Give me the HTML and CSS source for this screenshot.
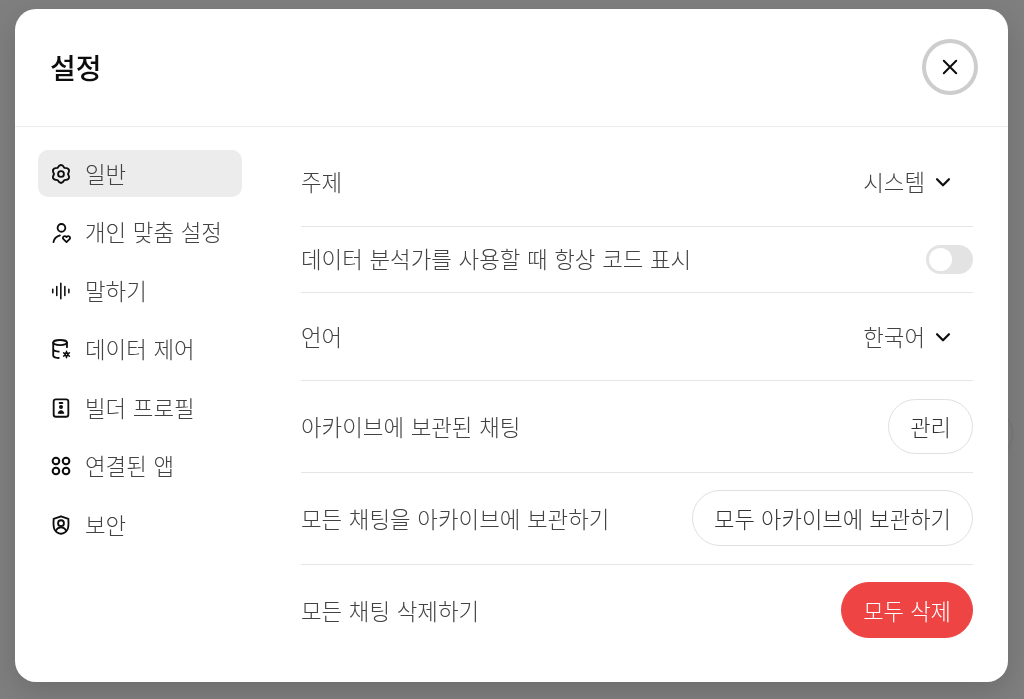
FILE: index.html
```html
<!DOCTYPE html>
<html lang="ko">
  <head>
    <meta charset="UTF-8" />
    <meta name="viewport" content="width=device-width, initial-scale=1.0" />
    <title>설정</title>
    <link rel="stylesheet" href="styles.css">
  </head>
  <body>
    <div class="behindBtn"></div>
    <div class="modal">
      <div class="modalHeader">
        <h1>설정</h1>
        <button class="closeBtn" aria-label="닫기">
          <svg width="24" height="24" viewBox="0 0 24 24" fill="none" stroke="#0d0d0d" stroke-width="2" stroke-linecap="round">
            <path d="M5.800 5.800 18.200 18.200M18.200 5.800 5.800 18.200" />
          </svg>
        </button>
      </div>
      <div class="modalBody">
        <nav class="sideNav">
          <a class="navItem active">
            <svg class="navIcon" viewBox="0 0 24 24" fill="none" stroke="#0d0d0d" stroke-width="2" stroke-linejoin="round">
              <path d="M8.200 5.400Q12-1 15.800 5.400Q23.260 5.500 19.600 12Q23.260 18.500 15.800 18.600Q12 25 8.200 18.600Q.74 18.500 4.400 12Q.74 5.500 8.200 5.400z" />
              <circle cx="12" cy="12" r="3.200" />
            </svg>
            <span>일반</span>
          </a>
          <a class="navItem">
            <svg class="navIcon" viewBox="0 0 24 24" fill="none" stroke="#0d0d0d" stroke-width="2" stroke-linecap="round" stroke-linejoin="round">
              <circle cx="12.500" cy="7.500" r="4.200" />
              <path d="M3.800 23c.5-3 2.500-5.800 7-7.200" />
              <path d="M18 23l-3.300-3.200c-1.800-2 .9-4.600 3.300-2.400 2.400-2.200 5.100.4 3.300 2.400z" />
            </svg>
            <span>개인 맞춤 설정</span>
          </a>
          <a class="navItem">
            <svg class="navIcon" viewBox="0 0 24 24" fill="none" stroke="#0d0d0d" stroke-width="1.700" stroke-linecap="round">
              <path d="M3 10v4M7.400 7v10M11.800 3.500v17M16.200 7v10M20.600 10v4" />
            </svg>
            <span>말하기</span>
          </a>
          <a class="navItem">
            <svg class="navIcon" viewBox="0 0 24 24" fill="none" stroke="#0d0d0d" stroke-width="2" stroke-linecap="round" stroke-linejoin="round">
              <ellipse cx="11" cy="5" rx="7.500" ry="2.800" />
              <path d="M3.500 5v14c0 1.500 3 2.600 6 2.800M18.500 5v5M3.500 12c0 1.500 3 2.600 6 2.800" />
              <circle cx="18" cy="18" r="1.600" stroke-width="2" />
              <path d="M18 14.500v1M18 20.500v1M14.800 16.200l.9.500M20.300 19.300l.9.500M14.800 19.800l.9-.5M20.300 16.700l.9-.5" stroke-width="1.600" />
            </svg>
            <span>데이터 제어</span>
          </a>
          <a class="navItem">
            <svg class="navIcon" viewBox="0 0 24 24" fill="none" stroke="#0d0d0d" stroke-width="2" stroke-linecap="round" stroke-linejoin="round">
              <rect x="4" y="2.500" width="16" height="19" rx="2.500" />
              <path d="M10.500 6.500h3" />
              <circle cx="12" cy="11" r="1.200" />
              <path d="M9 17.500c0-3.500 6-3.500 6 0z" fill="#0d0d0d" stroke-width="1" />
            </svg>
            <span>빌더 프로필</span>
          </a>
          <a class="navItem">
            <svg class="navIcon" viewBox="0 0 24 24" fill="none" stroke="#0d0d0d" stroke-width="2.200">
              <circle cx="6.500" cy="6.500" r="3.600" />
              <circle cx="17.500" cy="6.500" r="3.600" />
              <circle cx="6.500" cy="17.500" r="3.600" />
              <circle cx="17.500" cy="17.500" r="3.600" />
            </svg>
            <span>연결된 앱</span>
          </a>
          <a class="navItem">
            <svg class="navIcon" viewBox="0 0 24 24" fill="none" stroke="#0d0d0d" stroke-width="2" stroke-linecap="round" stroke-linejoin="round">
              <path d="M12 2.500l8 2.800c.4 6 .4 9-.9 11.500-1.400 2.700-4 4.700-7.100 4.700s-5.700-2-7.100-4.700C3.600 14.300 3.600 11.300 4 5.300z" />
              <circle cx="12" cy="10" r="3.200" />
              <path d="M6.500 18c1-2.500 3-3.500 5.500-3.500s4.500 1 5.500 3.500" />
            </svg>
            <span>보안</span>
          </a>
        </nav>
        <div class="settings">
          <div class="row rowFirst">
            <span>주제</span>
            <div class="selectBox">
              <span>시스템</span>
              <svg class="chevron" viewBox="0 0 24 24" fill="none" stroke="#0d0d0d" stroke-width="2.400" stroke-linecap="round" stroke-linejoin="round">
                <path d="M5.500 9l6.500 6.500L18.500 9" />
              </svg>
            </div>
          </div>
          <div class="row rowToggle">
            <span>데이터 분석가를 사용할 때 항상 코드 표시</span>
            <div class="toggle"><div class="knob"></div></div>
          </div>
          <div class="row rowLang">
            <span>언어</span>
            <div class="selectBox">
              <span>한국어</span>
              <svg class="chevron" viewBox="0 0 24 24" fill="none" stroke="#0d0d0d" stroke-width="2.400" stroke-linecap="round" stroke-linejoin="round">
                <path d="M5.500 9l6.500 6.500L18.500 9" />
              </svg>
            </div>
          </div>
          <div class="row">
            <span>아카이브에 보관된 채팅</span>
            <button class="pillBtn">관리</button>
          </div>
          <div class="row">
            <span>모든 채팅을 아카이브에 보관하기</span>
            <button class="pillBtn">모두 아카이브에 보관하기</button>
          </div>
          <div class="row">
            <span>모든 채팅 삭제하기</span>
            <button class="pillBtn danger">모두 삭제</button>
          </div>
        </div>
      </div>
    </div>
  </body>
</html>
```

FILE: styles.css
```css
html,
body {
  height: 100%;
}

body {
  margin: 0;
  padding: 9px 16px 17px 15px;
  box-sizing: border-box;
  background-color: #7f7f7f;
  font-family: "Noto Sans CJK KR", "Noto Sans", sans-serif;
  word-spacing: 0.4px;
  overflow: hidden;
}

/* edge of a page button that shows next to the modal */
.behindBtn {
  position: absolute;
  top: 406px;
  left: 957px;
  width: 56px;
  height: 56px;
  border: 1px solid #777;
  border-radius: 50%;
  box-sizing: border-box;
}

.modal {
  position: relative;
  background-color: #fff;
  border-radius: 21px;
  height: 673px;
  box-shadow: 0 10px 30px rgba(0, 0, 0, 0.15);
  will-change: transform;
}

.modalHeader {
  display: flex;
  justify-content: space-between;
  align-items: center;
  height: 118px;
  padding: 0 30px 0 35px;
  border-bottom: 1px solid #ececec;
  box-sizing: border-box;
}

h1 {
  margin: 0;
  padding-bottom: 2px;
  font-size: 28px;
  font-weight: 500;
  color: #0d0d0d;
}

.closeBtn {
  display: flex;
  align-items: center;
  justify-content: center;
  width: 56px;
  height: 55.6px;
  padding: 0;
  margin-bottom: 1px;
  background-color: #fff;
  border: 4px solid #cdcdcd;
  border-radius: 50%;
}

.modalBody {
  display: flex;
}

.sideNav {
  display: flex;
  flex-direction: column;
  gap: 11.6px;
  width: 204px;
  margin: 23px 0 0 23px;
}

.navItem {
  display: flex;
  align-items: center;
  gap: 13px;
  height: 47px;
  padding: 0 12px;
  border-radius: 10px;
  color: #424242;
  font-size: 22.4px;
  font-weight: 300;
  white-space: nowrap;
}

.navItem span {
  padding-bottom: 2px;
}

.navItem.active {
  background-color: #ececec;
}

.navIcon {
  width: 22px;
  height: 22px;
  flex-shrink: 0;
}

.settings {
  width: 672px;
  margin-left: 59px;
  padding-top: 10px;
}

.row {
  display: flex;
  justify-content: space-between;
  align-items: center;
  height: 91.8px;
  border-bottom: 1px solid #e5e5e5;
  box-sizing: border-box;
  color: #424242;
  font-size: 22.4px;
  font-weight: 300;
}

.row > span,
.selectBox span {
  padding-bottom: 1px;
}

.row:last-child {
  height: 91px;
  border-bottom: none;
}

.rowFirst {
  height: 90px;
}

.rowToggle {
  height: 66px;
}

.rowToggle > span {
  padding-bottom: 3px;
}

.rowLang {
  height: 88px;
}

.selectBox {
  display: flex;
  align-items: center;
  gap: 7px;
  padding-right: 19px;
}

.chevron {
  width: 22px;
  height: 22px;
}

.toggle {
  width: 47px;
  height: 29px;
  border-radius: 15px;
  background-color: #e3e3e3;
  padding: 3px;
  box-sizing: border-box;
}

.knob {
  width: 23px;
  height: 23px;
  border-radius: 50%;
  background-color: #fff;
}

.pillBtn {
  height: 55.6px;
  padding: 0 21px 1px;
  background-color: #fff;
  border: 1px solid #e0e0e0;
  border-radius: 28px;
  color: #333;
  font-family: inherit;
  font-size: 22.2px;
  font-weight: 300;
  white-space: nowrap;
}

.pillBtn.danger {
  background-color: #ef4444;
  border-color: #ef4444;
  color: #fff;
}
```
